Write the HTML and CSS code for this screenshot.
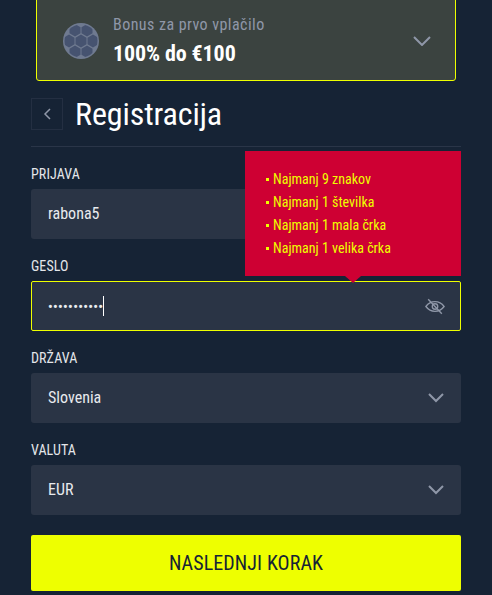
FILE: index.html
```html
<!DOCTYPE html>
<html lang="sl">
<head>
    <meta charset="UTF-8">
    <meta name="viewport" content="width=device-width, initial-scale=1.0">
    <title>Registracija</title>
    <link rel="stylesheet" href="styles.css">
</head>
<body>
    <div class="page">
        <div class="bonus">
            <svg class="ball" viewBox="0 0 36 36" width="36" height="36">
                <defs>
                    <clipPath id="ball-clip"><circle cx="18" cy="18" r="16.500"/></clipPath>
                </defs>
                <circle cx="18" cy="18" r="18" fill="#6f7a90"/>
                <g clip-path="url(#ball-clip)" fill="#465370">
                    <path d="M18 11.500l5.500 3.200v6.600L18 24.500l-5.500-3.200v-6.600z"/>
                    <path d="M6 11.500l5.500 3.200v6.600L6 24.500l-5.500-3.200v-6.600z"/>
                    <path d="M30 11.500l5.500 3.200v6.600L30 24.500l-5.500-3.200v-6.600z"/>
                    <path d="M12 1l5.500 3.200v6L12 13.500 6.500 10.300v-6z"/>
                    <path d="M24 1l5.500 3.200v6L24 13.500l-5.500-3.200v-6z"/>
                    <path d="M12 22.500l5.500 3.200v6L12 35 6.500 31.800v-6.100z"/>
                    <path d="M24 22.500l5.500 3.200v6L24 35l-5.500-3.200v-6.100z"/>
                </g>
            </svg>
            <div class="bonus-text">
                <div class="bonus-label">Bonus za prvo vplačilo</div>
                <div class="bonus-value">100% do €100</div>
            </div>
            <svg class="chevron" viewBox="0 0 18 10" width="18" height="10"><path d="M1 1l8 8 8-8"/></svg>
        </div>

        <div class="heading">
            <div class="back">
                <svg viewBox="0 0 8 12" width="8" height="12"><path d="M7 1L2 6l5 5"/></svg>
            </div>
            <h1>Registracija</h1>
        </div>

        <form class="form">
            <div class="field">
                <label>PRIJAVA</label>
                <div class="input">rabona5</div>
            </div>
            <div class="field">
                <label>GESLO</label>
                <div class="input input-focus">
                    <span class="dots">•••••••••••</span><span class="caret"></span>
                    <svg class="eye" viewBox="0 0 22 18" width="20" height="17">
                        <path d="M1 9c2.600-3.500 6-5.300 10-5.300S18.400 5.500 21 9c-2.600 3.500-6 5.300-10 5.300S3.600 12.500 1 9z"/>
                        <circle cx="11" cy="9" r="3"/>
                        <path d="M3.500 1l15 16"/>
                    </svg>
                </div>
            </div>
            <div class="field">
                <label>DRŽAVA</label>
                <div class="input">Slovenia<svg class="chevron" viewBox="0 0 16 10" width="16" height="10"><path d="M1 1l7 7 7-7"/></svg></div>
            </div>
            <div class="field">
                <label>VALUTA</label>
                <div class="input">EUR<svg class="chevron" viewBox="0 0 16 10" width="16" height="10"><path d="M1 1l7 7 7-7"/></svg></div>
            </div>
            <button class="next" type="button">NASLEDNJI KORAK</button>

            <ul class="tooltip">
                <li>Najmanj 9 znakov</li>
                <li>Najmanj 1 številka</li>
                <li>Najmanj 1 mala črka</li>
                <li>Najmanj 1 velika črka</li>
            </ul>
        </form>
    </div>
</body>
</html>
```

FILE: styles.css
```css
html, body {
    margin: 0;
    height: 100%;
    overflow: hidden;
}
body {
    background-color: #162335;
    font-family: "Roboto Condensed", "Roboto", "Liberation Sans Narrow", sans-serif;
    font-stretch: 75%;
    color: #fff;
}
.page {
    padding: 0 31px;
}
.bonus {
    display: flex;
    align-items: center;
    box-sizing: border-box;
    height: 88px;
    margin: -7px 5px 0;
    padding: 7px 24px 0 26px;
    background-color: #3b4340;
    border: 1px solid #eeff00;
    border-radius: 3px;
}
.ball {
    flex: none;
    margin-right: 14px;
}
.bonus-text {
    flex: 1;
}
.bonus-label {
    font-size: 16px;
    line-height: 20px;
    letter-spacing: 0.45px;
    color: #8f97a8;
}
.bonus-value {
    margin-top: 6px;
    font-size: 22px;
    line-height: 26px;
    font-weight: 700;
    letter-spacing: -0.1px;
}
.chevron {
    flex: none;
    fill: none;
    stroke: #8f97a8;
    stroke-width: 2;
}
.heading {
    display: flex;
    align-items: center;
    height: 64px;
    margin-top: 1px;
    border-bottom: 1px solid #2a3548;
}
.back {
    display: flex;
    align-items: center;
    justify-content: center;
    box-sizing: border-box;
    width: 32px;
    height: 32px;
    margin-right: 12px;
    border: 1px solid #242f42;
}
.back svg {
    fill: none;
    stroke: #8f97a8;
    stroke-width: 1.5;
}
h1 {
    margin: 0;
    font-size: 32px;
    line-height: 40px;
    font-weight: 400;
    letter-spacing: -0.1px;
}
.form {
    position: relative;
    padding-top: 16px;
}
.field {
    margin-bottom: 16px;
}
label {
    display: block;
    height: 26px;
    font-size: 14px;
    line-height: 23px;
    letter-spacing: 0.1px;
    color: #e4e6ea;
}
.input {
    display: flex;
    align-items: center;
    justify-content: space-between;
    box-sizing: border-box;
    height: 50px;
    padding: 0 17px 2px;
    background-color: #2a3445;
    border-radius: 3px;
    font-size: 16px;
    color: #e8eaee;
}
.input .chevron {
    margin-top: 2px;
}
.input-focus {
    justify-content: flex-start;
    padding: 0 15px 0 16px;
    border: 1px solid #eeff00;
    border-radius: 2px;
}
.dots {
    font-size: 13px;
    font-weight: 700;
    letter-spacing: 0.35px;
}
.caret {
    width: 1px;
    height: 20px;
    background-color: #fff;
}
.eye {
    margin-left: auto;
    fill: none;
    stroke: #8f97a8;
    stroke-width: 1.5;
}
.next {
    display: block;
    width: 100%;
    height: 56px;
    margin-top: 20px;
    padding: 0;
    border: none;
    border-radius: 2px;
    background-color: #eeff00;
    color: #162335;
    font-family: inherit;
    font-stretch: inherit;
    font-size: 20px;
    letter-spacing: 0.1px;
}
.tooltip {
    position: absolute;
    top: 4px;
    right: 0;
    box-sizing: border-box;
    width: 216px;
    height: 125px;
    margin: 0;
    padding: 17px 0 0 21px;
    list-style: none;
    background-color: #ce0033;
    color: #eeff00;
    font-size: 14px;
    line-height: 23px;
}
.tooltip li::before {
    content: "";
    display: inline-block;
    width: 3px;
    height: 3px;
    margin-right: 4px;
    vertical-align: 3px;
    background-color: #eeff00;
}
.tooltip::after {
    content: "";
    position: absolute;
    left: 100px;
    bottom: -7px;
    border-left: 8px solid transparent;
    border-right: 8px solid transparent;
    border-top: 7px solid #ce0033;
}
```
